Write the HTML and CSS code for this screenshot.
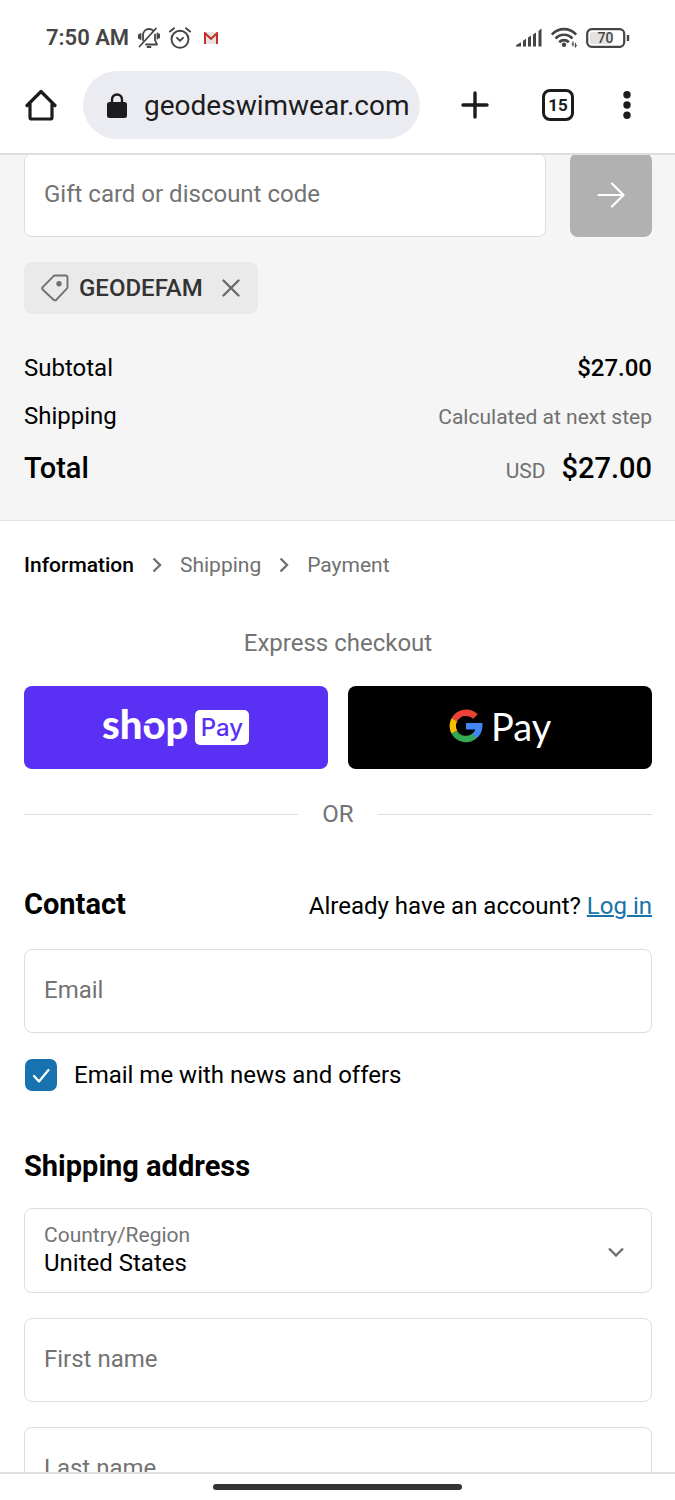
FILE: index.html
```html
<!DOCTYPE html>
<html lang="en">
<head>
<meta charset="utf-8">
<meta name="viewport" content="width=device-width, initial-scale=1">
<title>Checkout</title>
<link rel="stylesheet" href="styles.css">
</head>
<body>
<header class="browser">
  <div class="status">
    <span class="clock">7:50 AM</span>
    <svg class="status-icon" width="22" height="22" viewBox="0 0 22 22" fill="none" stroke="#454545" stroke-width="1.800" stroke-linecap="round" stroke-linejoin="round">
      <path d="M5 13V8.500c0-4 2.500-6.500 6-6.500 1.700 0 3 .5 4 1.500M17 7.500V13l2 4.500H8M9.500 20h3M1.500 19.500 18 1.500M2.500 7v5M.9 8v3M19.500 6.500v5M21.100 7.500v3"/>
    </svg>
    <svg class="status-icon" width="22" height="22" viewBox="0 0 22 22" fill="none" stroke="#454545" stroke-width="1.900" stroke-linecap="round" stroke-linejoin="round">
      <circle cx="11" cy="12.300" r="8.500"/><path d="M8 10.800l3 3 3-3M1 4.600 5 1.300M21 4.600l-4-3.300"/>
    </svg>
    <svg class="mail-icon" width="14" height="12" viewBox="0 0 14 12">
      <path d="M0 0h14v12H0z" fill="#e9e4e4"/><path d="M1 12V1.200L7 6.800l6-5.600V12" fill="none" stroke="#c5302b" stroke-width="2"/>
    </svg>
    <div class="signals">
      <svg width="26" height="19" viewBox="0 0 26 19" fill="#454545">
        <path d="M0 18.500v-1.200l5-3v4.200zM7 12.800l3-2v7.700H7zM12 9.500l3-2v11h-3zM17 6.500l3-2v14h-3zM22.500 3l3-2.500v18h-3z"/>
      </svg>
      <svg width="26" height="21" viewBox="0 0 26 21" fill="none" stroke="#454545" stroke-width="2.700">
        <path d="M.8 7.500c6.800-7.300 17.600-7.300 24.400 0M4.500 11.500c4.800-5 12.200-5 17 0M8.200 15.300c2.800-2.800 6.800-2.800 9.600 0"/>
        <circle cx="13" cy="17.800" r="2.200" fill="#454545" stroke="none"/>
        <path d="M22 14.500v5M24.500 16v4.500M20.500 17h2M24 18.500h2" stroke-width="1.200"/>
      </svg>
      <svg width="44" height="20" viewBox="0 0 44 20">
        <rect x="1.200" y="1.200" width="37" height="17.600" rx="4.500" fill="#fff" stroke="#454545" stroke-width="2.200"/>
        <rect x="4" y="4" width="21" height="12" rx="2" fill="#e2e2e2"/>
        <path d="M42 7v6" stroke="#454545" stroke-width="2.400"/>
        <text x="19.500" y="15" text-anchor="middle" class="battery-text">70</text>
      </svg>
    </div>
  </div>
  <div class="toolbar">
    <button class="tool home" aria-label="Home">
      <svg width="32" height="32" viewBox="0 0 32 32" fill="none" stroke="#1c1c1e" stroke-width="3.200" stroke-linejoin="round" stroke-linecap="round"><path d="M2 16.500 16 2.500l14 14M5 14v14.500q0 1.500 1.500 1.500h19q1.500 0 1.500-1.500V14"/></svg>
    </button>
    <div class="address">
      <svg width="20" height="26" viewBox="0 0 20 26"><rect x="0" y="9" width="20" height="16" rx="2.500" fill="#1c1c1e"/><path d="M5 10V6.500a5 5 0 0 1 10 0V10" fill="none" stroke="#1c1c1e" stroke-width="2.400"/></svg>
      <span class="url">geodeswimwear.com</span>
    </div>
    <button class="tool plus" aria-label="New tab">
      <svg width="28" height="28" viewBox="0 0 28 28" stroke="#1c1c1e" stroke-width="3.400" stroke-linecap="round"><path d="M14 2v24M2 14h24"/></svg>
    </button>
    <button class="tool tabs" aria-label="Open tabs">15</button>
    <button class="tool more" aria-label="More options">
      <svg width="8" height="28" viewBox="0 0 8 28" fill="#1c1c1e"><circle cx="4" cy="3.700" r="3.700"/><circle cx="4" cy="14" r="3.700"/><circle cx="4" cy="24.300" r="3.700"/></svg>
    </button>
  </div>
</header>

<main class="page">
  <section class="summary">
    <form class="discount">
      <input class="field" type="text" placeholder="Gift card or discount code" aria-label="Gift card or discount code">
      <button class="apply" type="button" aria-label="Apply">
        <svg width="28" height="26" viewBox="0 0 28 26" fill="none" stroke="#fff" stroke-width="2.200" stroke-linecap="round" stroke-linejoin="round"><path d="M1.500 13H26M15 1.500 26.500 13 15 24.500"/></svg>
      </button>
    </form>
    <div class="chip">
      <svg width="28" height="28" viewBox="0 0 28 28" fill="none" stroke="#707070" stroke-width="1.900" stroke-linejoin="round"><path d="M14 1.500h10.500q2 0 2 2V13q0 1-.7 1.700L15.500 25.700q-1.500 1.300-3 0L1.700 15.500q-1-1.200 0-2.300L12.300 2.300Q13 1.500 14 1.500z"/><circle cx="18" cy="9.800" r="2.700" fill="#707070" stroke="none"/></svg>
      <span>GEODEFAM</span>
      <button class="remove" aria-label="Remove GEODEFAM">
        <svg width="18" height="18" viewBox="0 0 18 18" stroke="#666" stroke-width="2.200" stroke-linecap="round"><path d="M1.500 1.500l15 15M16.500 1.500l-15 15"/></svg>
      </button>
    </div>
    <dl class="totals">
      <div class="line"><dt>Subtotal</dt><dd class="medium">$27.00</dd></div>
      <div class="line"><dt>Shipping</dt><dd class="note">Calculated at next step</dd></div>
      <div class="line total"><dt>Total</dt><dd><span class="note">USD</span>$27.00</dd></div>
    </dl>
  </section>

  <section class="checkout">
    <nav class="steps" aria-label="Steps">
      <span class="current">Information</span>
      <svg width="10" height="16" viewBox="0 0 10 16" fill="none" stroke="#707070" stroke-width="2.400"><path d="M1.500 1.500 8 8l-6.500 6.500"/></svg>
      <span>Shipping</span>
      <svg width="10" height="16" viewBox="0 0 10 16" fill="none" stroke="#707070" stroke-width="2.400"><path d="M1.500 1.500 8 8l-6.500 6.500"/></svg>
      <span>Payment</span>
    </nav>

    <h2 class="express-title">Express checkout</h2>
    <div class="express">
      <button class="pay shop" aria-label="Shop Pay">
        <svg width="148" height="56" viewBox="0 0 148 56">
          <text x="0" y="39" class="shop-word">shop</text>
          <path d="M39 24.500h8.500l1.500 3" fill="none" stroke="#5a31f4" stroke-width="2"/>
          <rect x="93" y="10" width="54" height="35" rx="5" fill="#fff"/>
          <text x="120" y="36" text-anchor="middle" class="shop-pay">Pay</text>
        </svg>
      </button>
      <button class="pay google" aria-label="Google Pay">
        <svg width="102" height="56" viewBox="0 0 102 56">
          <g fill="none" stroke-width="6.400">
            <path d="M5.370 19.800A13.300 13.300 0 0 1 26.500 16.600" stroke="#ea4335"/>
            <path d="M5.370 32.200A13.300 13.300 0 0 1 5.370 19.800" stroke="#fbbc04"/>
            <path d="M25.800 35.700A13.300 13.300 0 0 1 5.370 32.200" stroke="#34a853"/>
            <path d="M17 26.300h13.200a13.300 13.300 0 0 1-4.900 9.800" stroke="#4285f4"/>
          </g>
          <text x="42" y="41" class="google-pay">Pay</text>
        </svg>
      </button>
    </div>
    <div class="or">OR</div>

    <div class="section-head">
      <h2>Contact</h2>
      <p>Already have an account? <a href="#login">Log in</a></p>
    </div>
    <input class="field" type="email" placeholder="Email" aria-label="Email">
    <label class="news">
      <span class="check">
        <input type="checkbox" checked>
        <svg width="32" height="32" viewBox="0 0 32 32" fill="none" stroke="#fff" stroke-width="2.200" stroke-linecap="round" stroke-linejoin="round"><path d="M9 17l5 5.500L23.500 11"/></svg>
      </span>
      Email me with news and offers
    </label>

    <h2 class="address-title">Shipping address</h2>
    <div class="stack">
      <div class="select">
        <label for="country">Country/Region</label>
        <select class="field" id="country"><option>United States</option></select>
        <svg width="16" height="10" viewBox="0 0 16 10" fill="none" stroke="#707070" stroke-width="2.400"><path d="M1 1.500l7 7 7-7"/></svg>
      </div>
      <input class="field" type="text" placeholder="First name" aria-label="First name">
      <input class="field" type="text" placeholder="Last name" aria-label="Last name">
    </div>
  </section>
</main>
<footer class="gesture"><span></span></footer>
</body>
</html>
```
FILE: styles.css
```css
* { box-sizing: border-box; }
body {
  margin: 0;
  height: 100vh;
  display: flex;
  flex-direction: column;
  font-family: Roboto, sans-serif;
  font-size: 24px;
  line-height: 32px;
  color: #000;
  background: #fff;
}
button, input, select { font: inherit; color: inherit; margin: 0; }
button { padding: 0; border: 0; background: none; }
svg { display: block; flex: none; }
h2, p, dl, dd { margin: 0; }
h2 { font-size: 29px; font-weight: 700; }

.browser { flex: none; padding-bottom: 14px; border-bottom: 2px solid #dedede; }
.status {
  height: 71px;
  padding: 4px 45px 0 46px;
  display: flex;
  align-items: center;
  gap: 10px;
}
.clock { font-size: 22px; font-weight: 600; color: #454545; }
.status-icon { margin-left: -1px; }
.mail-icon { margin-left: 3px; }
.signals { margin-left: auto; display: flex; align-items: center; gap: 9px; }
.battery-text { font: 500 14px Roboto, sans-serif; fill: #454545; }
.toolbar { display: flex; align-items: center; padding: 0 44px 0 25px; }
.tool { flex: none; }
.address {
  flex: 1;
  min-width: 0;
  height: 68px;
  margin: 0 41px 0 26px;
  padding: 2px 8px 0 24px;
  display: flex;
  align-items: center;
  gap: 17px;
  border-radius: 34px;
  background: #ebecf1;
}
.url { white-space: nowrap; font-size: 28px; color: #1c1c1e; }
.tabs {
  width: 32px;
  height: 32px;
  margin: 0 49px 0 53px;
  border: 3px solid #1c1c1e;
  border-radius: 8px;
  font-size: 17px;
  line-height: 26px;
  font-weight: 700;
  color: #1c1c1e;
}

.page { flex: 1; min-height: 0; overflow: hidden; }
.field {
  display: block;
  width: 100%;
  min-width: 0;
  height: 84px;
  padding: 0 19px 3px;
  border: 1px solid #dedede;
  border-radius: 8px;
  background: #fff;
  appearance: none;
}
.field::placeholder { color: #737373; opacity: 1; }

.summary {
  margin-top: -2px;
  padding: 0 23px 33px 24px;
  background: #f5f5f5;
  border-bottom: 1px solid #e1e1e1;
}
.discount { display: flex; gap: 24px; }
.apply {
  flex: none;
  width: 82px;
  display: grid;
  place-items: center;
  border-radius: 8px;
  background: #b1b1b1;
}
.chip {
  width: max-content;
  height: 52px;
  margin: 25px 0 38px;
  padding: 0 18px 0 17px;
  display: flex;
  align-items: center;
  gap: 10px;
  border-radius: 8px;
  background: #eaeaea;
  color: #333;
  font-weight: 500;
}
.remove { margin-left: 9px; }
.line { display: flex; justify-content: space-between; align-items: baseline; }
.line + .line { margin-top: 16px; }
.line + .total { margin-top: 19px; }
.medium { font-weight: 500; }
.note { font-size: 21px; font-weight: 400; color: #707070; }
.total { font-size: 29px; font-weight: 500; }
.total .note { margin-right: 16px; }

.checkout { padding: 28px 23px 0 24px; }
.steps { display: flex; align-items: center; gap: 18px; font-size: 21px; color: #707070; }
.current { font-weight: 500; color: #000; }
.express-title {
  margin: 46px 0 27px;
  text-align: center;
  font-size: 24px;
  font-weight: 400;
  color: #737373;
}
.express { display: grid; grid-template-columns: 1fr 1fr; gap: 20px; }
.pay { height: 83px; display: grid; place-items: center; border-radius: 8px; }
.shop { background: #5a31f4; }
.google { background: #000; }
.shop-word { font: 900 40px Lato, sans-serif; fill: #fff; }
.shop-pay { font: 500 24px Inter, sans-serif; fill: #5a31f4; }
.google-pay { font: 400 38px Lato, sans-serif; fill: #fff; }
.or { display: flex; align-items: center; gap: 24px; margin: 29px 0 58px; color: #737373; }
.or::before, .or::after { content: ""; flex: 1; height: 1px; background: #dedede; }
.section-head {
  display: flex;
  justify-content: space-between;
  align-items: baseline;
  margin-bottom: 27px;
}
.section-head a { color: #1773a8; text-decoration-thickness: 2px; }
.news { display: flex; align-items: center; gap: 17px; margin: 26px 0 59px; padding-left: 1px; }
.check { display: grid; }
.check > * { grid-area: 1 / 1; }
.check input { appearance: none; width: 32px; height: 32px; border-radius: 7px; background: #1773b0; }
.check svg { pointer-events: none; z-index: 1; }
.address-title { margin-bottom: 26px; }
.stack { display: grid; gap: 25px; }
.select { position: relative; }
.select .field { height: 85px; padding: 24px 19px 0; }
.select label { position: absolute; left: 20px; top: 11px; font-size: 21px; color: #737373; }
.select svg { position: absolute; right: 28px; top: 39px; pointer-events: none; }

.gesture {
  flex: none;
  height: 28px;
  display: grid;
  place-items: center;
  border-top: 2px solid #dedede;
}
.gesture span { width: 37%; height: 6px; border-radius: 3px; background: #333; }
```
